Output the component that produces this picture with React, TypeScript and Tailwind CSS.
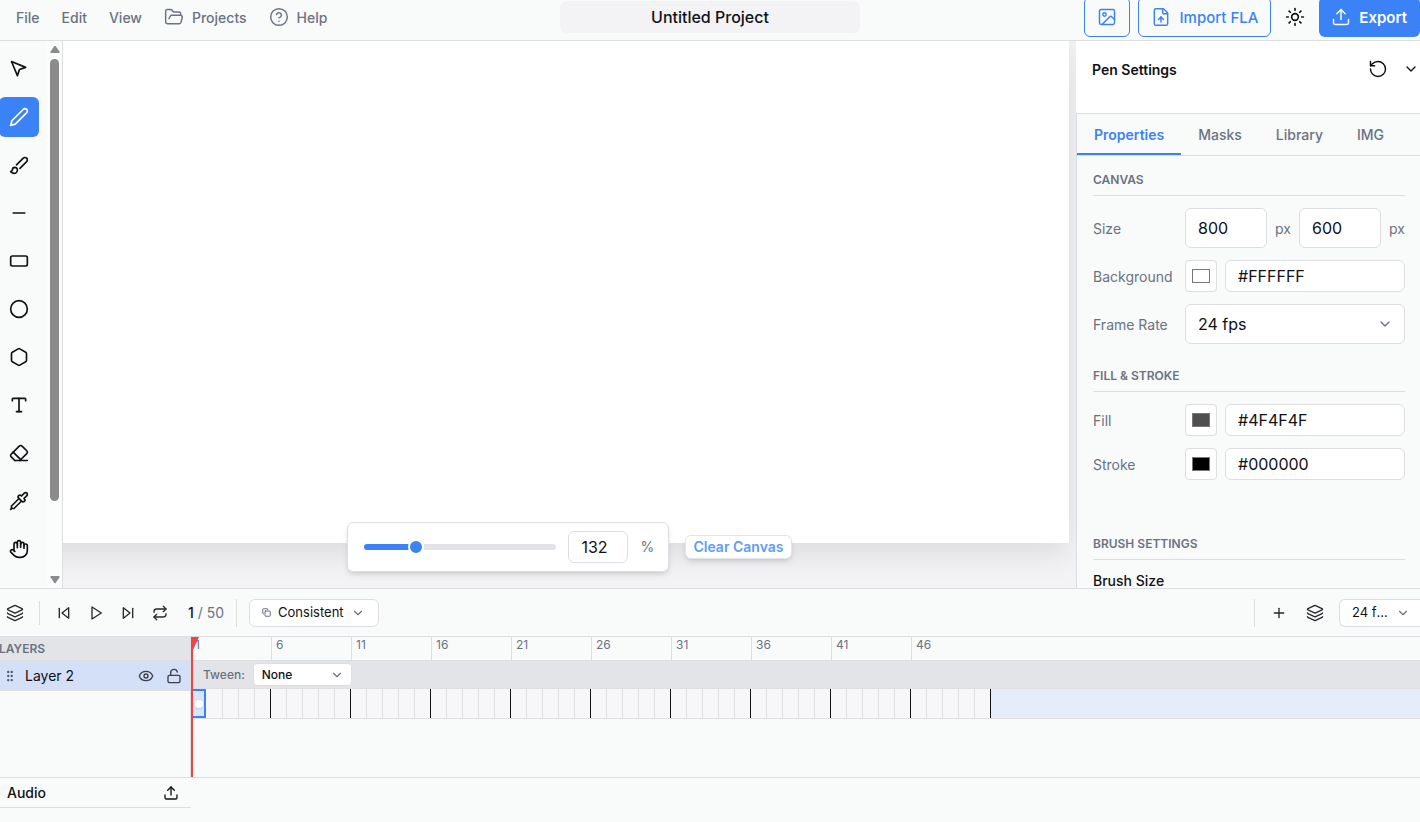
import React, { useState } from 'react';
import {
  ChevronDown,
  Circle,
  CircleHelp,
  Copy,
  Eye,
  FileUp,
  FolderOpen,
  GripVertical,
  Hand,
  Hexagon,
  Image,
  Layers,
  LockOpen,
  Minus,
  Plus,
  RectangleHorizontal,
  Repeat,
  RotateCcw,
  Sun,
  Type,
  Upload,
} from 'lucide-react';

type IconProps = { size?: number };

function Stroke({ size = 20, children }: IconProps & { children: React.ReactNode }) {
  return (
    <svg
      width={size}
      height={size}
      viewBox="0 0 24 24"
      fill="none"
      stroke="currentColor"
      strokeWidth="2"
      strokeLinecap="round"
      strokeLinejoin="round"
      aria-hidden="true"
    >
      {children}
    </svg>
  );
}

const PointerIcon = ({ size }: IconProps) => (
  <Stroke size={size}>
    <path d="m3 3 7.07 16.97 2.51-7.39 7.39-2.51L3 3z" />
  </Stroke>
);

const PenIcon = ({ size }: IconProps) => (
  <Stroke size={size}>
    <path d="M17 3a2.85 2.83 0 1 1 4 4L7.5 20.5 2 22l1.5-5.5Z" />
  </Stroke>
);

const BrushIcon = ({ size }: IconProps) => (
  <Stroke size={size}>
    <path d="m9.06 11.9 8.07-8.06a2.85 2.85 0 1 1 4.03 4.03l-8.06 8.08" />
    <path d="M7.07 14.94c-1.66 0-3 1.35-3 3.02 0 1.33-2.5 1.52-2 2.02 1.08 1.1 2.49 2.02 4 2.02 2.2 0 4-1.8 4-4.04a3.01 3.01 0 0 0-3-3.02z" />
  </Stroke>
);

const EraserIcon = ({ size }: IconProps) => (
  <Stroke size={size}>
    <path d="m7 21-4.3-4.3c-1-1-1-2.5 0-3.4l9.6-9.6c1-1 2.5-1 3.4 0l5.6 5.6c1 1 1 2.5 0 3.4L13 21" />
    <path d="M22 21H7" />
    <path d="m5 11 9 9" />
  </Stroke>
);

const PipetteIcon = ({ size }: IconProps) => (
  <Stroke size={size}>
    <path d="m2 22 1-1h3l9-9" />
    <path d="M3 21v-3l9-9" />
    <path d="m15 6 3.4-3.4a2.1 2.1 0 1 1 3 3L18 9l.4.4a2.1 2.1 0 1 1-3 3l-3.8-3.8a2.1 2.1 0 1 1 3-3l.4.4Z" />
  </Stroke>
);

const SkipBackIcon = ({ size }: IconProps) => (
  <Stroke size={size}>
    <polygon points="19 20 9 12 19 4 19 20" />
    <line x1="5" x2="5" y1="19" y2="5" />
  </Stroke>
);

const SkipForwardIcon = ({ size }: IconProps) => (
  <Stroke size={size}>
    <polygon points="5 4 15 12 5 20 5 4" />
    <line x1="19" x2="19" y1="5" y2="19" />
  </Stroke>
);

const PlayIcon = ({ size }: IconProps) => (
  <Stroke size={size}>
    <polygon points="6 3 20 12 6 21 6 3" />
  </Stroke>
);

const tools = [
  { name: 'Select', Icon: PointerIcon },
  { name: 'Pen', Icon: PenIcon },
  { name: 'Brush', Icon: BrushIcon },
  { name: 'Line', Icon: Minus },
  { name: 'Rectangle', Icon: RectangleHorizontal },
  { name: 'Ellipse', Icon: Circle },
  { name: 'Polygon', Icon: Hexagon },
  { name: 'Text', Icon: Type },
  { name: 'Eraser', Icon: EraserIcon },
  { name: 'Eyedropper', Icon: PipetteIcon },
  { name: 'Hand', Icon: Hand },
];

function Header() {
  return (
    <header className="grid h-[41px] shrink-0 grid-cols-[1fr_300px_1fr] items-center border-b border-[#dcdee2] pb-1.5">
      <nav className="flex items-center gap-[22px] pl-4 text-sm font-medium text-gray-500">
        <button className="pt-0.5">File</button>
        <button className="pt-0.5">Edit</button>
        <button className="pt-0.5">View</button>
        <button className="flex items-center gap-2">
          <FolderOpen size={20} strokeWidth={1.75} />
          <span className="pt-0.5">Projects</span>
        </button>
        <button className="flex items-center gap-2">
          <CircleHelp size={20} strokeWidth={1.75} />
          <span className="pt-0.5">Help</span>
        </button>
      </nav>
      <input
        aria-label="Project name"
        defaultValue="Untitled Project"
        className="h-8 w-full rounded-md bg-[#f3f3f6] text-center text-base font-medium outline-none"
      />
      <div className="flex h-[34px] items-center justify-end">
        <button
          aria-label="Import image"
          className="mr-2 flex h-10 w-[46px] items-center justify-center rounded-md border border-[#3b82f6] text-[#3b82f6]"
        >
          <Image size={20} strokeWidth={1.75} />
        </button>
        <button className="flex h-10 items-center gap-2 rounded-md border border-[#3b82f6] px-3 text-[15px] font-medium text-[#3b82f6]">
          <FileUp size={20} strokeWidth={1.75} />
          <span className="pt-0.5">Import FLA</span>
        </button>
        <button aria-label="Toggle theme" className="mx-1 flex size-10 items-center justify-center">
          <Sun size={20} />
        </button>
        <button className="flex h-10 items-center gap-2 rounded-md bg-[#3b82f6] pr-[13px] pl-3 text-[15px] font-semibold text-white">
          <Upload size={20} strokeWidth={1.75} />
          <span className="pt-0.5">Export</span>
        </button>
      </div>
    </header>
  );
}

function Toolbar() {
  const [active, setActive] = useState('Pen');
  return (
    <aside className="z-10 flex shrink-0 border-r border-[#dcdee2] bg-[#f9fbfa]">
      <div className="-ml-px flex flex-col gap-2 pt-2 pr-2">
        {tools.map(({ name, Icon }) => (
          <button
            key={name}
            aria-label={name}
            onClick={() => setActive(name)}
            className={
              name === active
                ? 'flex size-10 items-center justify-center rounded-md bg-[#3b82f6] text-white'
                : 'flex size-10 items-center justify-center rounded-md'
            }
          >
            <Icon size={20} />
          </button>
        ))}
      </div>
      <div className="flex w-[15px] flex-col items-center bg-[#fbfcfc] pt-1 pb-1">
        <svg width="10" height="8" viewBox="0 0 10 8" fill="#8b8b8b" aria-hidden="true">
          <path d="M4.2 1.2a1 1 0 0 1 1.6 0l3.4 5A1 1 0 0 1 8.4 8H1.6A1 1 0 0 1 .8 6.2Z" />
        </svg>
        <div className="mt-1.5 mb-[75px] w-[9px] flex-1 rounded-full bg-[#8b8b8b]" />
        <svg width="10" height="8" viewBox="0 0 10 8" fill="#8b8b8b" aria-hidden="true">
          <path d="M4.2 6.8a1 1 0 0 0 1.6 0l3.4-5A1 1 0 0 0 8.4 0H1.6A1 1 0 0 0 .8 1.8Z" />
        </svg>
      </div>
    </aside>
  );
}

function Stage() {
  const [zoom, setZoom] = useState(132);
  const ratio = (zoom - 10) / 490;
  return (
    <main className="relative flex min-w-0 flex-1 overflow-hidden bg-[#f3f3f6]">
      <div className="mr-[7px] mb-[45px] -ml-10 flex-1 bg-white shadow-[0_10px_30px_rgba(0,0,0,0.1)]" />
      <div className="absolute inset-x-0 bottom-4 flex items-center justify-center gap-4">
        <div className="flex items-center gap-3 rounded-md border border-[#dcdee2] bg-white px-4 py-2 shadow-md">
          <input
            type="range"
            min={10}
            max={500}
            value={zoom}
            aria-label="Zoom"
            onChange={(e) => setZoom(Number(e.target.value))}
            style={{
              background: `linear-gradient(to right, #3b82f6 ${ratio * 100}%, #e3e4e8 ${ratio * 100}%)`,
            }}
            className="h-1.5 w-48 appearance-none rounded-full [&::-webkit-slider-thumb]:size-4 [&::-webkit-slider-thumb]:appearance-none [&::-webkit-slider-thumb]:rounded-full [&::-webkit-slider-thumb]:border-2 [&::-webkit-slider-thumb]:border-white [&::-webkit-slider-thumb]:bg-[#3b82f6]"
          />
          <input
            aria-label="Zoom percent"
            value={zoom}
            onChange={(e) => setZoom(Number(e.target.value) || 10)}
            className="h-8 w-[60px] rounded-md border border-[#dcdee2] px-3 text-base"
          />
          <span className="w-3 text-sm text-gray-500">%</span>
        </div>
        <button className="h-6 rounded-md border border-[#e3e4e8] bg-white px-[7px] text-sm font-semibold text-[#629bf8] shadow-md">
          Clear Canvas
        </button>
      </div>
    </main>
  );
}

function Section({ title, children }: { title: string; children: React.ReactNode }) {
  return (
    <section className="flex flex-col gap-3">
      <h3 className="h-6 border-b border-[#dcdee2] text-xs font-semibold text-gray-500 uppercase">{title}</h3>
      {children}
    </section>
  );
}

function ColorRow({ id, label, value }: { id: string; label: string; value: string }) {
  return (
    <div className="flex items-center gap-3">
      <label htmlFor={id} className="w-20 shrink-0 pt-0.5 text-sm text-gray-500">
        {label}
      </label>
      <div className="flex min-w-0 flex-1 gap-2">
        <input
          type="color"
          aria-label={`${label} swatch`}
          defaultValue={value.toLowerCase()}
          className="size-8 shrink-0 rounded border border-[#dcdee2] bg-white p-1"
        />
        <input
          id={id}
          defaultValue={value}
          className="h-8 w-full min-w-0 rounded-md border border-[#dcdee2] bg-white px-3 text-base"
        />
      </div>
    </div>
  );
}

const tabs = ['Properties', 'Masks', 'Library', 'IMG'];

function Inspector() {
  const [tab, setTab] = useState('Properties');
  return (
    <aside className="flex w-[344px] shrink-0 flex-col overflow-hidden">
      <div className="flex h-[72px] shrink-0 items-start bg-white pt-[18px] pr-px pl-4">
        <h2 className="flex-1 pt-px text-sm font-semibold">Pen Settings</h2>
        <button aria-label="Reset" className="mr-[15px]">
          <RotateCcw size={20} strokeWidth={1.75} />
        </button>
        <button aria-label="Collapse" className="mt-0.5">
          <ChevronDown size={16} />
        </button>
      </div>
      <div className="flex min-h-0 flex-1 flex-col border-t border-l border-[#dcdee2]">
        <div className="flex h-[42px] shrink-0 border-b border-[#dcdee2] text-sm font-medium">
          {tabs.map((name) => (
            <button
              key={name}
              onClick={() => setTab(name)}
              className={
                name === tab
                  ? 'border-b-2 border-[#3b82f6] px-[17px] pt-0.5 font-semibold text-[#3b82f6]'
                  : 'border-b-2 border-transparent px-[17px] pt-0.5 text-gray-500'
              }
            >
              {name}
            </button>
          ))}
        </div>
        <div className="flex flex-col gap-6 py-4 pr-[15px] pl-4">
          <Section title="Canvas">
            <div className="flex items-center gap-3">
              <label htmlFor="width" className="w-20 shrink-0 pt-0.5 text-sm text-gray-500">
                Size
              </label>
              <div className="flex min-w-0 flex-1 items-center gap-2 text-sm text-gray-500">
                <input
                  id="width"
                  defaultValue="800"
                  className="h-10 w-full min-w-0 rounded-md border border-[#dcdee2] bg-white px-3 text-base text-[#0f1115]"
                />
                <span className="pt-0.5">px</span>
                <input
                  aria-label="Height"
                  defaultValue="600"
                  className="h-10 w-full min-w-0 rounded-md border border-[#dcdee2] bg-white px-3 text-base text-[#0f1115]"
                />
                <span className="pt-0.5">px</span>
              </div>
            </div>
            <ColorRow id="background" label="Background" value="#FFFFFF" />
            <div className="flex items-center gap-3">
              <label htmlFor="rate" className="w-20 shrink-0 pt-0.5 text-sm text-gray-500">
                Frame Rate
              </label>
              <div className="relative flex-1">
                <select
                  id="rate"
                  className="h-10 w-full appearance-none rounded-md border border-[#dcdee2] bg-white px-3 text-base"
                >
                  <option>24 fps</option>
                </select>
                <ChevronDown size={16} className="pointer-events-none absolute top-3 right-3 text-gray-500" />
              </div>
            </div>
          </Section>
          <Section title="Fill & Stroke">
            <ColorRow id="fill" label="Fill" value="#4F4F4F" />
            <ColorRow id="stroke" label="Stroke" value="#000000" />
          </Section>
          <div className="pt-8">
            <Section title="Brush Settings">
              <p className="text-sm leading-[18px] font-medium">Brush Size</p>
            </Section>
          </div>
        </div>
      </div>
    </aside>
  );
}

function PlayerButton({ label, children }: { label: string; children: React.ReactNode }) {
  return (
    <button aria-label={label} className="flex size-8 items-center justify-center text-[#26282c]">
      {children}
    </button>
  );
}

function PlaybackBar() {
  return (
    <div className="flex h-[48px] items-center justify-between border-b border-[#dcdee2]">
      <div className="-ml-px flex items-center">
        <PlayerButton label="Onion skin">
          <Layers size={18} strokeWidth={1.75} />
        </PlayerButton>
        <span className="mx-2 h-6 w-px bg-[#dcdee2]" />
        <PlayerButton label="First frame">
          <SkipBackIcon size={16} />
        </PlayerButton>
        <PlayerButton label="Play">
          <PlayIcon size={16} />
        </PlayerButton>
        <PlayerButton label="Last frame">
          <SkipForwardIcon size={16} />
        </PlayerButton>
        <PlayerButton label="Loop">
          <Repeat size={16} />
        </PlayerButton>
        <span className="px-3 text-sm text-gray-500">
          <span className="font-medium text-[#0f1115]">1</span> / 50
        </span>
        <span className="mr-3 h-7 w-px bg-[#dcdee2]" />
        <div className="relative flex items-center">
          <Copy size={9} className="pointer-events-none absolute left-[13px] text-gray-700" />
          <select
            aria-label="Frame mode"
            className="h-7 w-[130px] appearance-none rounded-md border border-[#dcdee2] bg-white pl-7 text-[13px]"
          >
            <option>Consistent</option>
          </select>
          <ChevronDown size={14} className="pointer-events-none absolute right-3.5 text-gray-500" />
        </div>
      </div>
      <div className="flex items-center">
        <span className="mr-2 h-7 w-px bg-[#dcdee2]" />
        <PlayerButton label="Add layer">
          <Plus size={16} />
        </PlayerButton>
        <span className="w-1" />
        <PlayerButton label="Layer options">
          <Layers size={18} strokeWidth={1.75} />
        </PlayerButton>
        <div className="relative ml-2 flex items-center">
          <select
            aria-label="Timeline frame rate"
            className="h-7 w-[81px] appearance-none overflow-hidden rounded-l-md border border-r-0 border-[#dcdee2] bg-white pr-8 pl-3 text-[13px] text-ellipsis"
          >
            <option>24 fps</option>
          </select>
          <ChevronDown size={14} className="pointer-events-none absolute right-2.5 text-gray-500" />
        </div>
      </div>
    </div>
  );
}

const frames = Array.from({ length: 50 }, (_, i) => i + 1);
const marks = frames.filter((n) => n % 5 === 1);

function frameClass(n: number) {
  if (n === 1)
    return 'mr-px flex w-[15px] shrink-0 items-center justify-center border-2 border-[#3b82f6] bg-[#d9e5fa]';
  if (n % 5 === 0) return 'w-4 shrink-0 border-r border-[#0f1115]';
  return 'w-4 shrink-0 border-r border-[#dcdee2]';
}

function Timeline() {
  return (
    <footer className="shrink-0 border-t border-[#dcdee2] pb-3.5">
      <PlaybackBar />
      <div className="flex h-[141px] border-b border-[#dcdee2]">
        <div className="w-[191px] shrink-0 border-r border-[#dcdee2]">
          <h3 className="-ml-px h-6 border-b border-[#dcdee2] bg-[#e3e4e8] text-xs leading-6 font-semibold text-gray-500">
            LAYERS
          </h3>
          <div className="flex h-[30px] items-center border-b border-[#dcdee2] bg-[#d3e0f8] pr-2 pl-[3px] text-sm">
            <GripVertical size={14} className="text-gray-600" />
            <span className="flex-1 pl-2">Layer 2</span>
            <button aria-label="Toggle visibility" className="mr-3 text-[#3a3f48]">
              <Eye size={16} />
            </button>
            <button aria-label="Lock layer" className="text-[#3a3f48]">
              <LockOpen size={16} />
            </button>
          </div>
        </div>
        <div className="relative min-w-0 flex-1 overflow-hidden">
          <div className="flex h-6 border-b border-[#dcdee2] text-xs leading-4 text-gray-500">
            {marks.map((n) => (
              <span
                key={n}
                className={n === 1 ? 'w-20 shrink-0 pl-1' : 'w-20 shrink-0 border-l border-[#dcdee2] pl-1'}
              >
                {n}
              </span>
            ))}
          </div>
          <div className="flex h-[28px] items-center gap-2 border-b border-[#dcdee2] bg-[#e3e4e8] pl-3 text-xs text-gray-500">
            <label htmlFor="tween" className="font-medium">
              Tween:
            </label>
            <div className="relative flex items-center">
              <select
                id="tween"
                className="h-[23px] w-[99px] appearance-none rounded border border-[#dcdee2] bg-white pl-2 text-xs font-medium text-[#0f1115]"
              >
                <option>None</option>
              </select>
              <ChevronDown size={14} className="pointer-events-none absolute right-2" />
            </div>
          </div>
          <div className="flex h-[30px] border-b border-[#dcdee2] bg-[#e5edfa]">
            <div className="flex bg-[#f7f7f7]">
              {frames.map((n) => (
                <div key={n} className={frameClass(n)}>
                  {n === 1 && <span className="size-2 shrink-0 rounded-full bg-white shadow-sm" />}
                </div>
              ))}
            </div>
          </div>
          <div className="absolute inset-y-0 left-0 w-0.5 bg-[#ef4444]" />
          <svg
            width="8"
            height="13"
            viewBox="0 0 8 13"
            fill="#ef4444"
            aria-hidden="true"
            className="absolute top-0 left-0"
          >
            <path d="M0 0h8L2 13H0Z" />
          </svg>
        </div>
      </div>
      <div className="flex h-[30px] w-[191px] items-center justify-between border-b border-[#dcdee2] pr-3 pl-[7px] text-sm font-medium">
        Audio
        <button aria-label="Upload audio">
          <Upload size={16} />
        </button>
      </div>
    </footer>
  );
}

export default function App() {
  return (
    <div className="flex h-screen flex-col overflow-hidden bg-[#f9fbfa] font-['Inter',sans-serif] text-[#0f1115]">
      <Header />
      <div className="flex min-h-0 flex-1 overflow-hidden">
        <Toolbar />
        <Stage />
        <Inspector />
      </div>
      <Timeline />
    </div>
  );
}
